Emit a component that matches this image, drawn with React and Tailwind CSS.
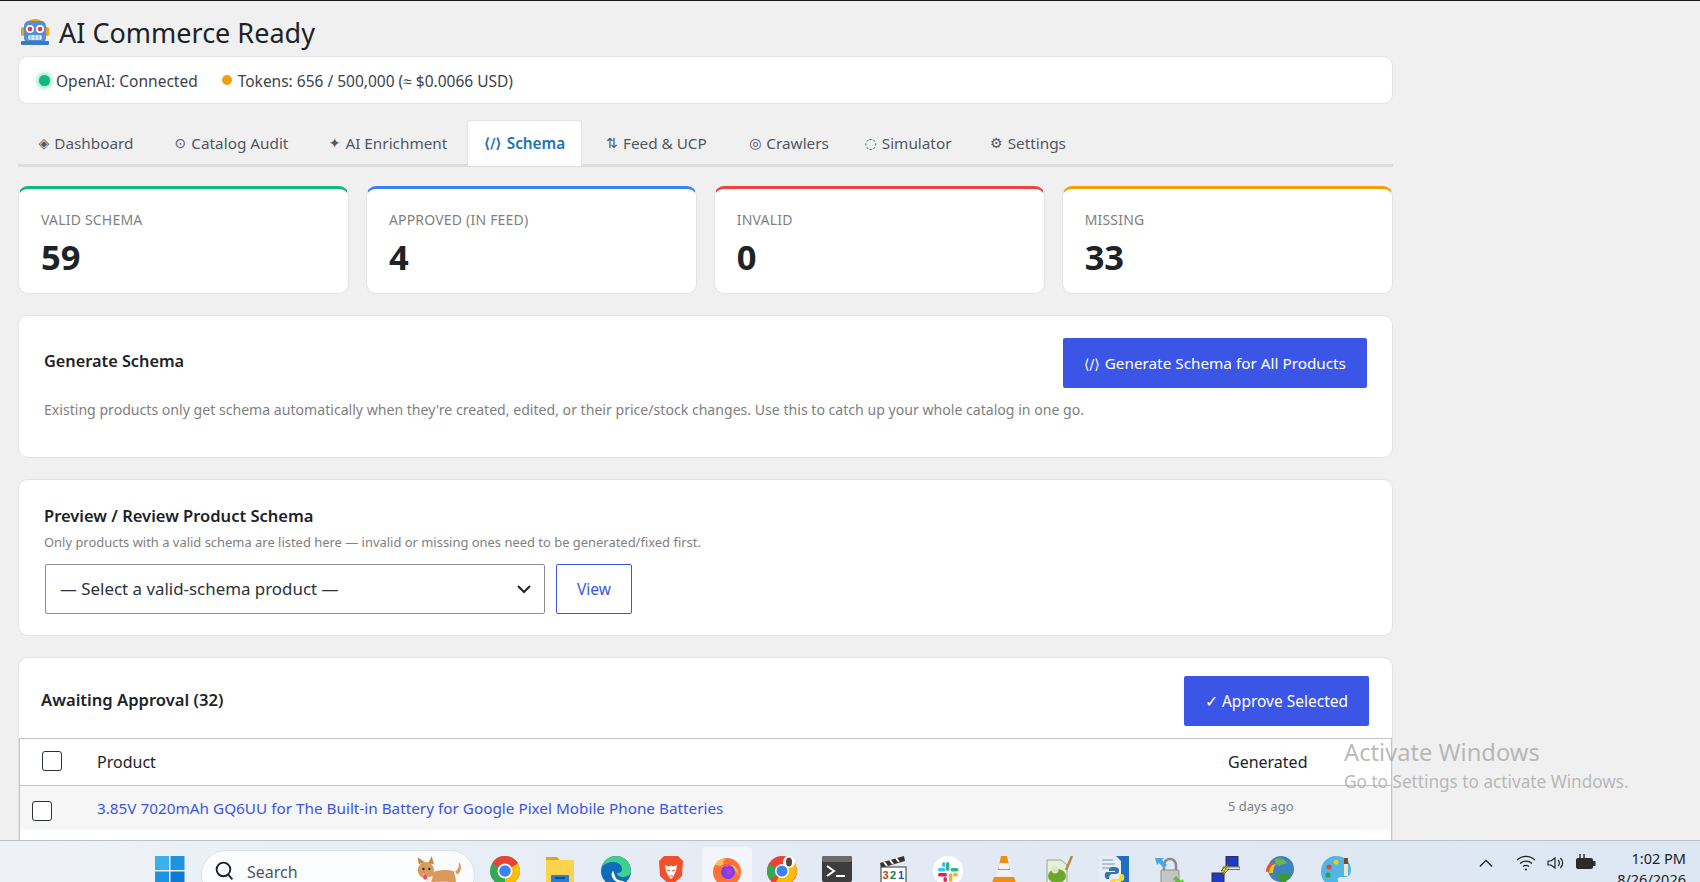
import React from 'react';

const tabs = [
  { glyph: '◈', label: 'Dashboard', w: 'w-[136px]' },
  { glyph: '⊙', label: 'Catalog Audit', w: 'w-[155px]' },
  { glyph: '✦', label: 'AI Enrichment', w: 'w-[158px]' },
  { glyph: '⟨/⟩', label: 'Schema', w: 'w-[115px]', active: true },
  { glyph: '⇅', label: 'Feed & UCP', w: 'w-[149px]' },
  { glyph: '◎', label: 'Crawlers', w: 'w-[116px]' },
  { glyph: '◌', label: 'Simulator', w: 'w-[122px]' },
  { glyph: '⚙', label: 'Settings', w: 'w-[118px]' },
];

const stats = [
  { label: 'Valid Schema', value: '59', border: 'border-t-[#10b981]' },
  { label: 'Approved (in feed)', value: '4', border: 'border-t-[#3b82f6]' },
  { label: 'Invalid', value: '0', border: 'border-t-[#ef4444]' },
  { label: 'Missing', value: '33', border: 'border-t-[#f59e0b]' },
];

const RobotEmoji = () => (
  <svg viewBox="0 0 30 30" className="w-[30px] h-[30px] shrink-0">
    <path d="M5 10a10 8 0 0 1 20 0" fill="#f59e0b" />
    <rect x="1" y="10" width="4" height="9" rx="2" fill="#f59e0b" />
    <rect x="25" y="10" width="4" height="9" rx="2" fill="#f59e0b" />
    <rect x="4" y="4" width="22" height="22" rx="5" fill="#4f8fdc" />
    <rect x="1" y="24" width="28" height="4" rx="1" fill="#3b78c4" />
    <circle cx="10" cy="12" r="4" fill="#fff" />
    <circle cx="20" cy="12" r="4" fill="#fff" />
    <circle cx="10" cy="12" r="2.3" fill="#e0364c" />
    <circle cx="20" cy="12" r="2.3" fill="#e0364c" />
    <rect x="8" y="18" width="14" height="5" rx="2" fill="#d8e6f5" />
    <path d="M11 18v5M15 18v5M19 18v5" stroke="#8fb2dc" strokeWidth="1" />
  </svg>
);

const ChromeIcon = ({ inner = '#3b82f6' }) => (
  <svg viewBox="0 0 30 30" className="w-[30px] h-[30px]">
    <circle cx="15" cy="15" r="15" fill="#34a853" />
    <path d="M15 15 2 7.5A15 15 0 0 1 28 7.5Z" fill="#ea4335" />
    <path d="M15 15 28 7.5A15 15 0 0 1 15 30Z" fill="#fbbc04" />
    <circle cx="15" cy="15" r="7.5" fill="#fff" />
    <circle cx="15" cy="15" r="5.8" fill={inner} />
  </svg>
);

const WindowsIcon = () => (
  <svg viewBox="0 0 30 30" className="w-[30px] h-[30px]">
    <rect x="0" y="0" width="14" height="14" fill="#3bb0ea" />
    <rect x="15.5" y="0" width="14" height="14" fill="#1c93e0" />
    <rect x="0" y="15.5" width="14" height="14" fill="#1c93e0" />
    <rect x="15.5" y="15.5" width="14" height="14" fill="#0f78cf" />
  </svg>
);

const FolderIcon = () => (
  <svg viewBox="0 0 30 30" className="w-[30px] h-[30px]">
    <path d="M1 1h11l3 3H1Z" fill="#e0a520" />
    <rect x="1" y="4" width="28" height="26" fill="#fcd34d" />
    <rect x="6" y="19" width="18" height="11" rx="1" fill="#2b7cd3" />
    <rect x="10" y="21" width="10" height="2" fill="#0f4f99" />
  </svg>
);

const EdgeIcon = () => (
  <svg viewBox="0 0 30 30" className="w-[30px] h-[30px]">
    <circle cx="15" cy="15" r="15" fill="#0f6cbd" />
    <path d="M1 11C3 3 10 0 15 0c8 0 15 6 15 15 0 3-3 6-8 6-4 0-6-2-6-4 3 0 5-1 5-4 0-4-4-7-8-7-5 0-10 2-12 5Z" fill="#3fcf8e" />
    <path d="M12 15c-3 3-1 9 4 11 3 1 6 0 8-1-5 0-9-1-10-5-1-2-1-4-2-5Z" fill="#fff" />
  </svg>
);

const BraveIcon = () => (
  <svg viewBox="0 0 30 30" className="w-[30px] h-[30px]">
    <path d="M8 0h14l5 5-1 15-11 10L4 20 3 5Z" fill="#f0502a" />
    <path d="M9 9l4 1.5 2-1 2 1L21 9l-1 6-3 6-2 2-2-2-3-6Z" fill="#fff" />
    <path d="M11 14l3 1M19 14l-3 1M13 20h4" stroke="#f0502a" strokeWidth="1.2" />
  </svg>
);

const FirefoxIcon = () => (
  <svg viewBox="0 0 30 30" className="w-[30px] h-[30px]">
    <circle cx="15" cy="16" r="14" fill="#ff7139" />
    <path d="M3 9c2-4 6-7 11-7-2 1-3 4-3 6 4-2 11 0 14 5 1 2 2 5 2 7-2-5-6-9-11-9-4 0-7-1-13-2Z" fill="#ffbd4f" />
    <circle cx="16" cy="16" r="7" fill="#7542e5" />
    <circle cx="17" cy="16" r="3" fill="#b833e1" />
    <path d="M9 10c3-3 9-4 13-1-3-1-5 0-6 2Z" fill="#ff4f5e" />
  </svg>
);

const ChromeUserIcon = () => (
  <svg viewBox="0 0 30 30" className="w-[30px] h-[30px]">
    <circle cx="15" cy="15" r="15" fill="#ea4335" />
    <path d="M15 15 3 24A15 15 0 0 1 2 8Z" fill="#34a853" />
    <path d="M15 15 28 7.5A15 15 0 0 1 8 28Z" fill="#fbbc04" />
    <circle cx="15" cy="15" r="7" fill="#fff" />
    <circle cx="15" cy="15" r="5.5" fill="#3b82f6" />
    <circle cx="22" cy="6" r="6" fill="#fff" />
    <ellipse cx="22" cy="6" rx="3" ry="4.5" fill="#5b4636" />
  </svg>
);

const TerminalIcon = () => (
  <svg viewBox="0 0 30 30" className="w-[30px] h-[30px]">
    <rect width="30" height="26" rx="2" fill="#3c3c3c" />
    <rect width="30" height="6" rx="2" fill="#6b6b6b" />
    <path d="M5 10l7 5-7 5" stroke="#fff" strokeWidth="2" fill="none" />
    <rect x="14" y="19" width="9" height="2" fill="#fff" />
  </svg>
);

const ClapperIcon = () => (
  <svg viewBox="0 0 30 30" className="w-[30px] h-[30px]">
    <path d="M2 7 26 0l1 5-24 7Z" fill="#333" />
    <path d="M6 6l3 4M12 4l3 4M18 2l3 4" stroke="#fff" strokeWidth="2" />
    <rect x="3" y="11" width="25" height="19" fill="#fff" stroke="#333" />
    <text x="4.5" y="22.5" fontSize="11" fontWeight="700" fontFamily="Liberation Sans" fill="#c2410c">3</text>
    <text x="12" y="22.5" fontSize="11" fontWeight="700" fontFamily="Liberation Sans" fill="#15803d">2</text>
    <text x="20" y="22.5" fontSize="11" fontWeight="700" fontFamily="Liberation Sans" fill="#1d4ed8">1</text>
  </svg>
);

const SlackIcon = () => (
  <svg viewBox="0 0 30 30" className="w-[30px] h-[30px]">
    <circle cx="15" cy="15" r="15" fill="#fff" />
    <rect x="13" y="6" width="3.4" height="9" rx="1.7" fill="#2eb67d" />
    <rect x="17.5" y="12" width="8" height="3.4" rx="1.7" fill="#2eb67d" />
    <rect x="5" y="12" width="7.5" height="3.4" rx="1.7" fill="#36c5f0" />
    <rect x="9" y="6" width="3.4" height="5" rx="1.7" fill="#36c5f0" />
    <rect x="5" y="17" width="9" height="3.4" rx="1.7" fill="#e01e5a" />
    <rect x="10.5" y="21" width="3.4" height="5" rx="1.7" fill="#e01e5a" />
    <rect x="16" y="17" width="3.4" height="9" rx="1.7" fill="#ecb22e" />
    <rect x="20" y="17" width="5" height="3.4" rx="1.7" fill="#ecb22e" />
  </svg>
);

const VlcIcon = () => (
  <svg viewBox="0 0 30 30" className="w-[30px] h-[30px]">
    <path d="M12 0h6l3 14H9Z" fill="#f28c12" />
    <path d="M10.5 7h9l1 6h-11Z" fill="#f3f3f3" />
    <path d="M9 14h12l1.5 6h-15Z" fill="#f3f3f3" />
    <path d="M5 21h20l3 9H2Z" fill="#f28c12" />
  </svg>
);

const NotepadIcon = () => (
  <svg viewBox="0 0 30 30" className="w-[30px] h-[30px]">
    <path d="M3 4h14l6 5v21H3Z" fill="#e8efd8" stroke="#9aa88a" />
    <ellipse cx="13" cy="20" rx="9" ry="7" fill="#6aa82c" />
    <circle cx="11" cy="14" r="3.5" fill="#d9e7c0" />
    <path d="M28 0 22 14" stroke="#b98a3c" strokeWidth="2.5" />
  </svg>
);

const PythonFileIcon = () => (
  <svg viewBox="0 0 30 30" className="w-[30px] h-[30px]">
    <rect width="30" height="30" fill="#1f6fc4" />
    <path d="M0 0h17l5 5v25H0Z" fill="#e8eef5" />
    <path d="M3 4h11M3 8h13M3 12h13" stroke="#9db4c9" strokeWidth="1.5" />
    <path d="M15 11c-5 0-5 2-5 4h6v1H8c-3 0-3 7 0 7h2c0-3 1-5 4-5h3c2 0 3-1 3-3v-1c0-2-2-3-5-3Z" fill="#3776ab" />
    <path d="M16 30c5 0 5-2 5-4h-5v-1h7c3 0 3-7 0-7h-2c0 3-1 5-4 5h-3c-2 0-3 1-3 3v1c0 2 2 3 5 3Z" fill="#ffd43b" />
  </svg>
);

const LockIcon = () => (
  <svg viewBox="0 0 30 30" className="w-[30px] h-[30px]">
    <path d="M9 15V9a6 6 0 0 1 12 0v6" stroke="#8a8a8a" strokeWidth="2.5" fill="none" />
    <rect x="6" y="14" width="18" height="14" rx="1" fill="#c4c4c4" stroke="#8e8e8e" />
    <path d="M0 2h9L7 4l5 5-3 3-5-5-2 2Z" fill="#4aa5e8" />
    <path d="M30 30h-9l2-2-5-5 3-3 5 5 2-2Z" fill="#5fbf3c" />
  </svg>
);

const NetworkIcon = () => (
  <svg viewBox="0 0 30 30" className="w-[30px] h-[30px]">
    <rect x="16" y="0" width="12" height="10" fill="#1d3bc4" stroke="#333" />
    <rect x="13" y="11" width="17" height="2.5" fill="#eee" stroke="#333" strokeWidth="0.7" />
    <rect x="2" y="17" width="12" height="10" fill="#1d3bc4" stroke="#333" />
    <rect x="0" y="28" width="17" height="2" fill="#eee" stroke="#333" strokeWidth="0.7" />
    <path d="M18 8 11 15h4l-4 6 8-8h-4l4-5Z" fill="#facc15" stroke="#333" strokeWidth="0.6" />
  </svg>
);

const IdmIcon = () => (
  <svg viewBox="0 0 30 30" className="w-[30px] h-[30px]">
    <circle cx="16" cy="13" r="13" fill="#3f82c4" />
    <path d="M10 3c4-2 10 0 12 4-3 2-6 0-7 3-3 0-6-3-5-7Z" fill="#6fb34a" />
    <path d="M1 16c0-8 6-11 10-11-3 2-5 5-5 10Z" fill="#e0562c" />
    <path d="M4 17c0-6 4-9 7-9-2 2-3 5-3 9Z" fill="#f3c318" />
    <path d="M10 17h17l-9 13Z" fill="#3a9a35" />
  </svg>
);

const PaletteIcon = () => (
  <svg viewBox="0 0 30 30" className="w-[30px] h-[30px]">
    <path d="M15 0C6 0 0 7 0 16c0 8 6 14 14 14 4 0 4-3 3-5s0-4 3-4h4c4 0 6-3 6-7C30 6 24 0 15 0Z" fill="#4fb6e8" />
    <circle cx="8" cy="11" r="2.6" fill="#e8443a" />
    <circle cx="15" cy="6" r="2.6" fill="#f5c518" />
    <circle cx="7" cy="19" r="2.6" fill="#2f9e44" />
    <path d="M23 6h4v14h-4Z" fill="#f3e2c7" />
    <rect x="23" y="2" width="4" height="6" fill="#7a4a24" />
  </svg>
);

const Corgi = () => (
  <svg viewBox="0 0 46 30" className="w-[54px] h-[35px] shrink-0 -mt-[2px]">
    <path d="M2 28 44 26l-4 6H6Z" fill="#6f9a2c" />
    <path d="M14 16c4-3 14-4 20-2l2 8-3 6h-2l-2-5H18l-1 6h-3Z" fill="#d99a5b" />
    <path d="M35 14c3-1 4-5 3-8 3 2 3 8-1 11Z" fill="#d99a5b" />
    <circle cx="10" cy="13" r="7" fill="#d99a5b" />
    <path d="M4 8 3 2l6 4ZM12 7l3-6 2 7Z" fill="#c4854a" />
    <path d="M7 14c1 4 5 6 9 4l-2 8h-3l-2-6Z" fill="#f7ecdd" />
    <rect x="8" y="17" width="3" height="4" rx="1" fill="#e0556e" />
    <circle cx="8" cy="12" r="1" fill="#222" />
    <circle cx="13" cy="12" r="1" fill="#222" />
  </svg>
);

const taskbarIcons = [
  ChromeIcon,
  FolderIcon,
  EdgeIcon,
  BraveIcon,
  FirefoxIcon,
  ChromeUserIcon,
  TerminalIcon,
  ClapperIcon,
  SlackIcon,
  VlcIcon,
  NotepadIcon,
  PythonFileIcon,
  LockIcon,
  NetworkIcon,
  IdmIcon,
  PaletteIcon,
];

const Card = ({ className = '', children }) => (
  <div className={`bg-white border border-[#e4e4e4] rounded-[10px] ${className}`}>{children}</div>
);

const App = () => {
  return (
    <div className="h-[882px] w-[1700px] overflow-hidden relative flex flex-col bg-[#f0f0f0] border-t border-t-[#1a1a1a] font-['Noto_Sans',sans-serif] text-[#1d2327]">
      <div className="flex-1 min-h-0 overflow-hidden pl-[18px]">
        <div className="w-[1375px]">
          {/* Header */}
          <div className="h-[55px] flex items-center gap-[9px] pl-[2px] pt-[7px]">
            <RobotEmoji />
            <h1 className="text-[27px] leading-none text-[#1d2327]">AI Commerce Ready</h1>
          </div>

          {/* Status bar */}
          <Card className="h-[48px] flex items-center pl-[20px] text-[15.5px] text-[#3c434a]">
            <span className="w-[11px] h-[11px] rounded-full bg-[#10b981] shadow-[0_0_6px_#10b981] mr-[6px]"></span>
            <span className="mt-[3px]">OpenAI: Connected</span>
            <span className="w-[10px] h-[10px] rounded-full bg-[#f59e0b] ml-[24px] mr-[6px]"></span>
            <span className="mt-[3px]">Tokens: 656 / 500,000 (≈ $0.0066 USD)</span>
          </Card>

          {/* Tabs */}
          <div className="mt-[16px] h-[47px] flex border-b-[3px] border-b-[#dddddd]">
            {tabs.map(tab => (
              <div
                key={tab.label}
                className={`${tab.w} h-[46px] shrink-0 flex items-center justify-center gap-[5px] text-[15.3px] rounded-t-[4px] ${
                  tab.active
                    ? 'bg-white border border-b-0 border-[#e4e4e4] text-[#2271b1] font-semibold'
                    : 'text-[#50575e]'
                }`}
              >
                <span className="font-['DejaVu_Sans',sans-serif] text-[14px]">{tab.glyph}</span>
                <span>{tab.label}</span>
              </div>
            ))}
          </div>

          {/* Stats */}
          <div className="mt-[19px] grid grid-cols-4 gap-[16.5px]">
            {stats.map(s => (
              <div
                key={s.label}
                className={`h-[108px] bg-white border border-[#e4e4e4] border-t-[3px] ${s.border} rounded-[10px] px-[22px] pt-[21px]`}
              >
                <div className="text-[14px] leading-[20px] uppercase tracking-[0.2px] text-[#808080]">{s.label}</div>
                <div className="mt-[7px] text-[34.5px] leading-[40px] font-bold text-[#1d2327]">{s.value}</div>
              </div>
            ))}
          </div>

          {/* Generate schema */}
          <Card className="mt-[21px] h-[143px] pl-[25px] pr-[25px]">
            <div className="flex items-center justify-between pt-[22px]">
              <h2 className="text-[16.3px] leading-[24px] font-semibold -mt-[5px]">Generate Schema</h2>
              <button className="h-[50px] w-[304px] bg-[#3b55e6] rounded-[2px] text-white text-[15.3px]">
                <span className="font-['DejaVu_Sans',sans-serif] text-[14px] mr-[5px]">⟨/⟩</span>
                Generate Schema for All Products
              </button>
            </div>
            <p className="mt-[11px] text-[14.1px] leading-[22px] text-[#808080]">
              Existing products only get schema automatically when they're created, edited, or their price/stock changes. Use this to catch up your whole catalog in one go.
            </p>
          </Card>

          {/* Preview */}
          <Card className="mt-[21px] h-[157px] pl-[25px]">
            <h2 className="pt-[24px] text-[16.5px] leading-[24px] font-semibold">Preview / Review Product Schema</h2>
            <p className="mt-[4px] text-[12.95px] leading-[20px] text-[#808080]">
              Only products with a valid schema are listed here — invalid or missing ones need to be generated/fixed first.
            </p>
            <div className="mt-[12px] ml-[1px] flex gap-[11px]">
              <div className="w-[500px] h-[50px] flex items-center justify-between pl-[14px] pr-[12px] border border-[#8c8f94] rounded-[2px] text-[16.9px] text-[#2c3338]">
                <span>— Select a valid-schema product —</span>
                <svg viewBox="0 0 16 16" className="w-[16px] h-[16px]" fill="none" stroke="#1d2327" strokeWidth="2">
                  <path d="M2 5l6 6 6-6" />
                </svg>
              </div>
              <button className="w-[76px] h-[50px] border border-[#3b55e6] rounded-[2px] text-[#3b55e6] text-[15.5px] pt-[1px]">View</button>
            </div>
          </Card>

          {/* Approval table */}
          <Card className="mt-[21px] h-[300px] flex flex-col overflow-hidden rounded-b-none">
            <div className="h-[80px] shrink-0 flex items-center justify-between pl-[22px] pr-[23px]">
              <h2 className="text-[16.6px] font-semibold mt-[5px]">Awaiting Approval (32)</h2>
              <button className="w-[185px] h-[50px] mt-[5px] pt-[2px] bg-[#3b55e6] rounded-[2px] text-white text-[15.5px]">✓ Approve Selected</button>
            </div>
            <div className="flex-1 border-x border-[#c3c4c7]">
              <div className="h-[48px] flex items-center border-y border-[#c3c4c7]">
                <input type="checkbox" className="appearance-none w-[20px] h-[20px] ml-[22px] -mt-[3px] bg-white border border-[#2c3338] rounded-[3px]" />
                <span className="ml-[35px] flex-1 text-[16px]">Product</span>
                <span className="w-[163px] text-[16px]">Generated</span>
              </div>
              <div className="h-[44px] flex items-center bg-[#f6f6f6]">
                <input type="checkbox" className="appearance-none w-[20px] h-[20px] ml-[12px] mt-[5px] bg-white border border-[#2c3338] rounded-[3px]" />
                <a className="ml-[45px] flex-1 text-[15.3px] text-[#3b55e6]">3.85V 7020mAh GQ6UU for The Built-in Battery for Google Pixel Mobile Phone Batteries</a>
                <span className="w-[163px] text-[13px] -mt-[2px] text-[#808080]">5 days ago</span>
              </div>
            </div>
          </Card>
        </div>
      </div>

      {/* Windows taskbar */}
      <div className="h-[42px] shrink-0 flex border-t border-t-[#bcc0c6] bg-gradient-to-r from-[#eef2f7] via-[#e3eaf4] to-[#dce7f3] overflow-hidden">
        <div className="ml-[155px] mt-[15px]">
          <WindowsIcon />
        </div>
        <div className="ml-[16px] mt-[9px] w-[274px] h-[50px] rounded-full bg-white/80 border border-[#dfe3e8] flex items-start pl-[12px] pr-[6px] pt-[6px]">
          <svg viewBox="0 0 20 20" className="w-[21px] h-[21px] mt-[3px]" fill="none" stroke="#1d2327" strokeWidth="1.8">
            <circle cx="9" cy="9" r="6.5" />
            <path d="M13.5 14l4 4.5" />
          </svg>
          <span className="ml-[12px] flex-1 text-[16px] leading-[22px] mt-[4px] text-[#50575e]">Search</span>
          <Corgi />
        </div>
        <div className="ml-[15px] mt-[15px] flex gap-[25.4px]">
          {taskbarIcons.map((Icon, i) => (
            <div key={i} className="relative w-[30px] h-[30px] shrink-0">
              {i === 4 && <div className="absolute -left-[10px] -right-[10px] -top-[9px] h-[50px] bg-white/50 rounded-[4px]"></div>}
              <div className="relative">
                <Icon />
              </div>
            </div>
          ))}
        </div>
        <div className="ml-auto flex items-start text-[#1d2327]">
          <svg viewBox="0 0 16 10" className="w-[14px] h-[10px] mt-[17px]" fill="none" stroke="#1d2327" strokeWidth="1.6">
            <path d="M1 9l7-7 7 7" />
          </svg>
          <svg viewBox="0 0 20 16" className="ml-[23px] mt-[14px] w-[20px] h-[16px]" fill="none" stroke="#1d2327" strokeWidth="1.3">
            <path d="M1 5a13 13 0 0 1 18 0M4 8.5a9 9 0 0 1 12 0M7 11.5a5 5 0 0 1 6 0" />
            <circle cx="10" cy="14.5" r="1" fill="#1d2327" stroke="none" />
          </svg>
          <svg viewBox="0 0 20 16" className="ml-[10px] mt-[14px] w-[20px] h-[16px]" fill="none" stroke="#1d2327" strokeWidth="1.2">
            <path d="M2 6v4h3l4 3V3L5 6Z" />
            <path d="M12 5a4 4 0 0 1 0 6M14.5 3a7 7 0 0 1 0 10" />
          </svg>
          <svg viewBox="0 0 22 16" className="ml-[9px] mt-[13px] w-[22px] h-[16px]">
            <rect x="1" y="4" width="17" height="11" rx="2" fill="#2b2b2b" />
            <rect x="18" y="7" width="2.5" height="5" fill="#2b2b2b" />
            <path d="M5 0v5M9 0v5" stroke="#2b2b2b" strokeWidth="1.4" />
          </svg>
          <div className="ml-[20px] mr-[14px] mt-[7px] text-right text-[14.5px] leading-[21px]">
            <div>1:02 PM</div>
            <div>8/26/2026</div>
          </div>
        </div>
      </div>

      {/* Activate Windows watermark */}
      <div className="absolute left-[1344px] top-[735px] text-[#a8a8a8]/80 pointer-events-none">
        <div className="text-[23.7px] leading-[32px]">Activate Windows</div>
        <div className="text-[17.2px] leading-[24px] mt-[2px]">Go to Settings to activate Windows.</div>
      </div>
    </div>
  );
};

export default App;
